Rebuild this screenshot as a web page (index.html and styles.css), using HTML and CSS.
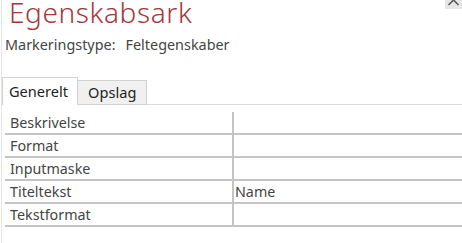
FILE: index.html
```html
<!DOCTYPE html>
<html lang="da">
<head>
<meta charset="utf-8">
<title>Egenskabsark</title>
<link rel="stylesheet" href="styles.css">
</head>
<body>
<div class="pane">
  <button class="close" aria-label="Luk">
    <svg width="17" height="9" viewBox="0 0 17 9"><path d="M3.5 -5 L13.5 5 M13.5 -5 L3.5 5" stroke="#5a5a5a" stroke-width="1.6" fill="none"/></svg>
  </button>
  <h1 class="title">Egenskabsark</h1>
  <div class="seltype"><span>Markeringstype:</span><span class="seltype-value">Feltegenskaber</span></div>
  <div class="tabs">
    <div class="tab tab-active">Generelt</div>
    <div class="tab tab-inactive">Opslag</div>
    <div class="tab-fill"></div>
  </div>
  <div class="grid">
    <div class="row"><div class="name">Beskrivelse</div><div class="value"></div></div>
    <div class="row"><div class="name">Format</div><div class="value"></div></div>
    <div class="row"><div class="name">Inputmaske</div><div class="value"></div></div>
    <div class="row"><div class="name">Titeltekst</div><div class="value">Name</div></div>
    <div class="row"><div class="name">Tekstformat</div><div class="value"></div></div>
  </div>
</div>
</body>
</html>
```
FILE: styles.css
```css
html, body {
  margin: 0;
  padding: 0;
  background: #ffffff;
}
body {
  font-family: "Noto Sans", "Open Sans", sans-serif;
  color: #444444;
  width: 462px;
  height: 243px;
  overflow: hidden;
}
.pane {
  position: relative;
  margin-left: 1px;
  border-left: 1px solid #e6e6e6;
  height: 243px;
}
.close {
  position: absolute;
  top: 0;
  right: 0;
  width: 17px;
  height: 9px;
  padding: 0;
  margin: 0;
  border: none;
  background: #e6e6e6;
  display: block;
}
.close svg {
  display: block;
}
.title {
  margin: 0;
  padding-left: 7px;
  font-weight: 300;
  font-size: 28px;
  letter-spacing: 0.6px;
  line-height: 24px;
  height: 24px;
  color: #a4373a;
}
.seltype {
  display: flex;
  gap: 10px;
  margin-top: 12px;
  padding-left: 3px;
  font-size: 14.4px;
  line-height: 18px;
  height: 18px;
}
.tabs {
  display: flex;
  align-items: flex-end;
  margin-top: 23px;
  height: 28px;
  font-size: 14.6px;
  color: #1e1e1e;
}
.tab {
  background: #ffffff;
}
.tab-active {
  border: 1px solid #d2d2d2;
  border-bottom: none;
  line-height: 27px;
  padding: 0 9px 0 6px;
}
.tab-inactive {
  background: #f0f0f0;
  border: 1px solid #d2d2d2;
  border-left: none;
  line-height: 23px;
  padding: 0 10px;
}
.tab-fill {
  flex: 1;
  border-bottom: 1px solid #dadada;
}
.grid {
  margin-top: 7px;
  margin-left: 3px;
  font-size: 14.3px;
}
.row {
  display: grid;
  grid-template-columns: 229px 1fr;
  border-bottom: 2px solid #c4c4c4;
  height: 21px;
  line-height: 21px;
}
.name {
  border-right: 2px solid #c4c4c4;
  padding-left: 5px;
  white-space: nowrap;
}
.value {
  padding-left: 1px;
  white-space: nowrap;
}
```
